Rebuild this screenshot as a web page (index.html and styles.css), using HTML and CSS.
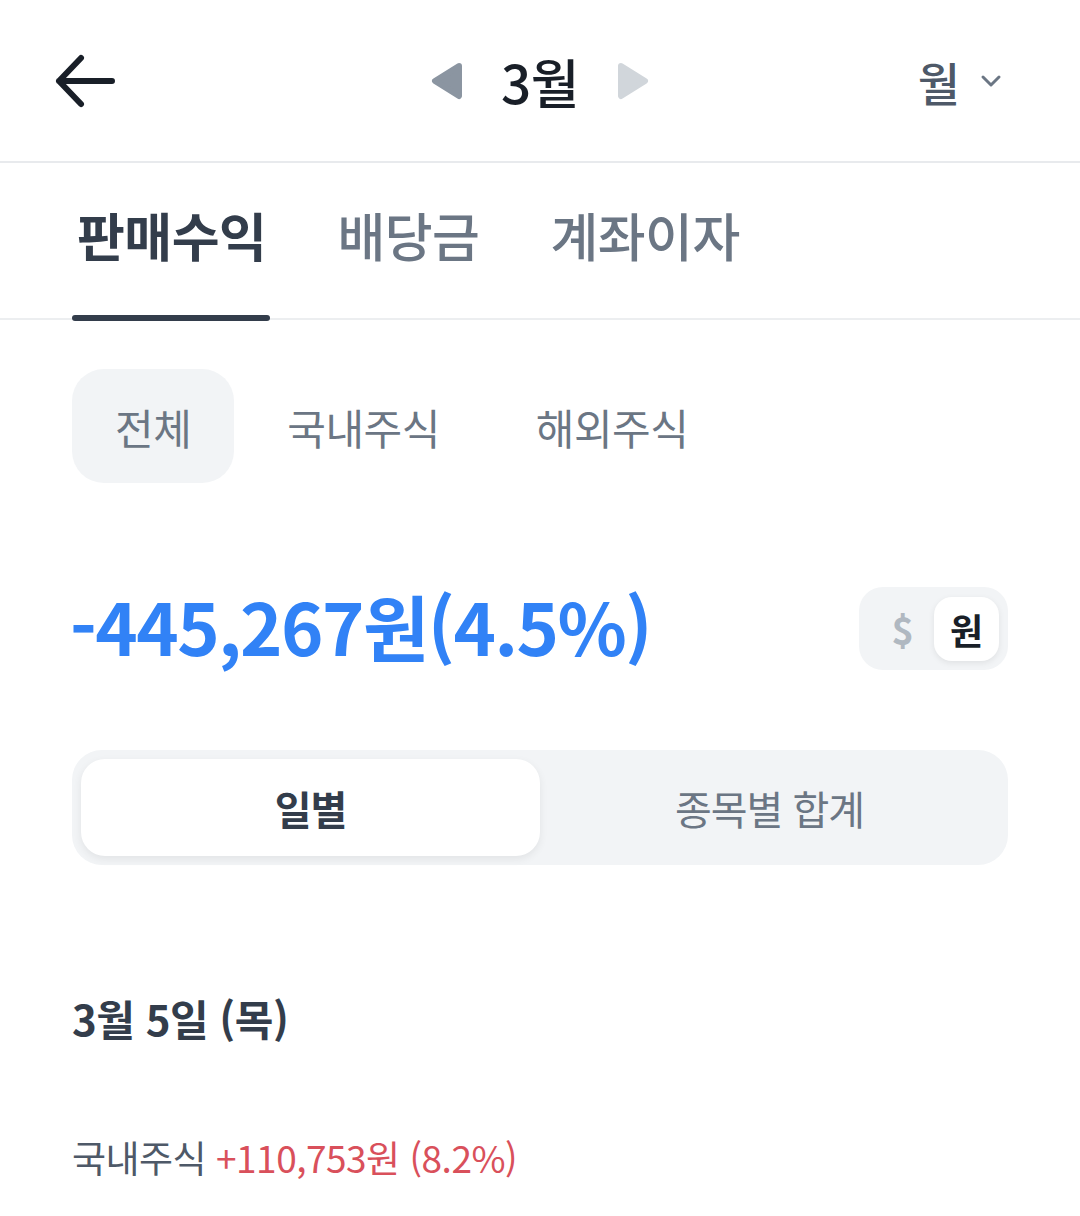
FILE: index.html
```html
<!DOCTYPE html>
<html lang="ko">
<head>
<meta charset="UTF-8" />
<meta name="viewport" content="width=device-width, initial-scale=1" />
<title>판매수익</title>
<link rel="stylesheet" href="styles.css">
</head>
<body>
  <header class="topbar">
    <button class="back" aria-label="뒤로">
      <svg width="62" height="56" viewBox="0 0 62 56">
        <path d="M5 28 H58 M27 5 L5 28 L27 51" fill="none" stroke="#191f28" stroke-width="6" stroke-linecap="round" stroke-linejoin="round"/>
      </svg>
    </button>
    <div class="month-nav">
      <svg class="tri" width="34" height="40" viewBox="0 0 34 40">
        <path d="M29 5 L5 20 L29 35 Z" fill="#8b95a1" stroke="#8b95a1" stroke-width="6" stroke-linejoin="round"/>
      </svg>
      <span class="month">3월</span>
      <svg class="tri" width="34" height="40" viewBox="0 0 34 40">
        <path d="M5 5 L29 20 L5 35 Z" fill="#d1d6db" stroke="#d1d6db" stroke-width="6" stroke-linejoin="round"/>
      </svg>
    </div>
    <div class="period">
      <span>월</span>
      <svg width="22" height="16" viewBox="0 0 22 16">
        <path d="M3 4 L11 12 L19 4" fill="none" stroke="#6b7684" stroke-width="3" stroke-linecap="round" stroke-linejoin="round"/>
      </svg>
    </div>
  </header>

  <nav class="tabs">
    <div class="tab active">판매수익</div>
    <div class="tab">배당금</div>
    <div class="tab">계좌이자</div>
  </nav>

  <main class="content">
    <div class="chips">
      <div class="chip active">전체</div>
      <div class="chip">국내주식</div>
      <div class="chip">해외주식</div>
    </div>

    <div class="summary">
      <div class="amount">-445,267원(4.5%)</div>
      <div class="currency">
        <span class="cur">$</span>
        <span class="cur on">원</span>
      </div>
    </div>

    <div class="segment">
      <div class="seg on">일별</div>
      <div class="seg">종목별 합계</div>
    </div>

    <h3 class="day">3월 5일 (목)</h3>

    <div class="row">
      <span class="label">국내주식</span>
      <span class="plus">+110,753원 (8.2%)</span>
    </div>
  </main>
</body>
</html>
```

FILE: styles.css
```css
* {
  box-sizing: border-box;
}
body {
  margin: 0;
  background: #ffffff;
  color: #191f28;
  font-family: 'Noto Sans CJK KR', 'Noto Sans', sans-serif;
}
.topbar {
  height: 163px;
  border-bottom: 2px solid #e8eaed;
  display: grid;
  grid-template-columns: 1fr auto 1fr;
  align-items: center;
  padding: 0 54px;
}
.back {
  background: none;
  border: none;
  padding: 0;
  justify-self: start;
  display: flex;
}
.month-nav {
  display: flex;
  align-items: center;
  gap: 37px;
}
.month {
  font-size: 53px;
  font-weight: 500;
  letter-spacing: -0.5px;
  color: #191f28;
}
.period {
  justify-self: end;
  display: flex;
  align-items: center;
  gap: 20px;
  padding-right: 24px;
  font-size: 46px;
  font-weight: 500;
  color: #4e5968;
}
.tabs {
  height: 157px;
  border-bottom: 2px solid #eceef0;
  display: flex;
  padding: 0 77px;
  gap: 71px;
}
.tab {
  display: flex;
  align-items: center;
  font-size: 52px;
  font-weight: 500;
  letter-spacing: -0.5px;
  color: #6b7684;
  padding-bottom: 12px;
  position: relative;
}
.tab.active {
  color: #333d4b;
  font-weight: 700;
}
.tab.active::after {
  content: '';
  position: absolute;
  left: -5px;
  right: -4px;
  bottom: -3px;
  height: 6px;
  border-radius: 3px;
  background: #333d4b;
}
.content {
  padding: 49px 72px 0;
}
.chips {
  display: flex;
  gap: 10px;
}
.chip {
  height: 114px;
  display: flex;
  align-items: center;
  padding: 0 43px;
  font-size: 42px;
  letter-spacing: -0.5px;
  color: #6b7684;
  border-radius: 32px;
}
.chip.active {
  background: #f2f4f6;
}
.summary {
  margin-top: 104px;
  display: flex;
  justify-content: space-between;
  align-items: center;
}
.amount {
  font-size: 72px;
  font-weight: 700;
  letter-spacing: -1.5px;
  line-height: 1;
  color: #3182f6;
  margin-left: -2px;
  padding-bottom: 8px;
}
.currency {
  width: 149px;
  height: 83px;
  background: #f2f4f6;
  border-radius: 24px;
  display: flex;
  align-items: center;
  justify-content: flex-end;
  padding: 0 9px;
  gap: 20px;
}
.cur {
  font-size: 38px;
  font-weight: 700;
  color: #b0b8c1;
}
.cur.on {
  width: 65px;
  height: 64px;
  background: #ffffff;
  border-radius: 18px;
  display: flex;
  align-items: center;
  justify-content: center;
  color: #191f28;
  font-size: 36px;
  box-shadow: 0 2px 6px rgba(0, 0, 0, 0.08);
}
.segment {
  margin-top: 80px;
  height: 115px;
  background: #f2f4f6;
  border-radius: 30px;
  padding: 9px;
  display: flex;
}
.seg {
  flex: 1;
  display: flex;
  align-items: center;
  justify-content: center;
  font-size: 40px;
  letter-spacing: -1px;
  color: #6b7684;
  border-radius: 24px;
}
.seg.on {
  background: #ffffff;
  color: #333d4b;
  font-weight: 700;
  box-shadow: 0 3px 8px rgba(0, 0, 0, 0.07);
}
.day {
  margin: 122px 0 0;
  font-size: 42px;
  font-weight: 700;
  letter-spacing: -0.5px;
  color: #333d4b;
}
.row {
  margin-top: 82px;
  font-size: 37px;
  letter-spacing: -0.5px;
}
.label {
  color: #4e5968;
}
.plus {
  color: #d9505b;
}
```
